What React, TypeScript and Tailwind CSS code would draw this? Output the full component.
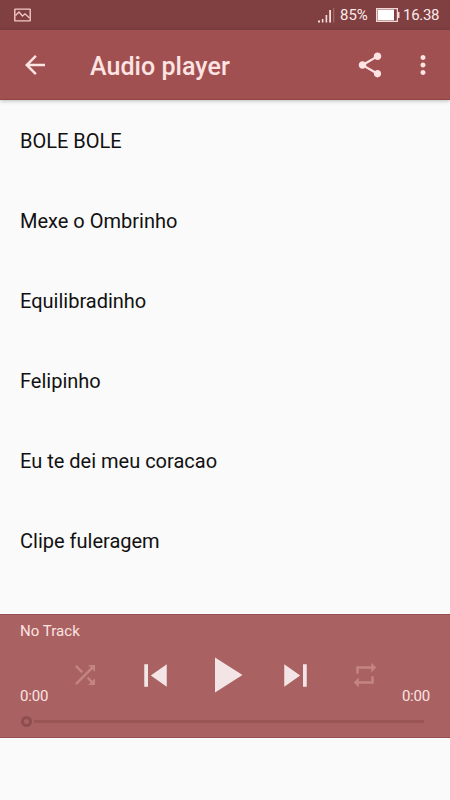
import { ReactNode } from 'react'

const TRACKS = [
  'BOLE BOLE',
  'Mexe o Ombrinho',
  'Equilibradinho',
  'Felipinho',
  'Eu te dei meu coracao',
  'Clipe fuleragem'
]

interface IconProps {
  path: string
  className?: string
}

/** 24 unit material icon */
function Icon({ path, className = '' }: IconProps) {
  return (
    <svg viewBox="0 0 24 24" fill="currentColor" className={`shrink-0 ${className}`}>
      <path d={path} />
    </svg>
  )
}

interface IconButtonProps {
  label: string
  className?: string
  children: ReactNode
}

function IconButton({ label, className = '', children }: IconButtonProps) {
  return (
    <button aria-label={label} className={`flex items-center justify-center ${className}`}>
      {children}
    </button>
  )
}

function StatusBar() {
  return (
    <div className="flex h-[30px] items-center bg-[#803f40] text-[#fbeaea]">
      <svg viewBox="0 0 17 14" className="ml-[14px] h-[14px] w-[17px]" fill="none" stroke="#f3c9c8">
        <rect x="0.8" y="1.1" width="15.4" height="11.8" rx="0.5" strokeWidth="1.4" />
        <path d="M1.5 7.5 5 4l3.5 4L11 5.8l4.5 4.2" strokeWidth="1.3" />
      </svg>
      <svg viewBox="0 0 18 16" className="ml-auto h-4 w-[18px]">
        <path fill="#f7dcdc" d="M1 13.500h2v2H1zM4.800 12h1.600v3.500H4.800zM8.600 8h1.600v7.500H8.600zM12.200 3h1.800v12.500h-1.800z" />
        <path fill="#a06666" d="M16 1h1.300v14.500H16z" />
      </svg>
      <span className="ml-[5px] w-[29px] pt-px text-[15px] leading-none">85%</span>
      <svg viewBox="0 0 24 16" className="ml-[7px] h-4 w-6">
        <path fill="#f3d6d6" d="M0 1h22v4h1.500v6H22v4H0zM1.200 2.200v11.600h19.600V2.200z" fillRule="evenodd" />
        <path fill="#ffffff" d="M1.600 2.600h16.400v10.800H1.600z" />
      </svg>
      <span className="mr-[10px] ml-[3px] w-[37px] pt-px text-[15px] leading-none tracking-[-0.3px]">16.38</span>
    </div>
  )
}

function AppBar() {
  return (
    <header className="relative flex h-[70px] items-center border-b border-[#8f4545] bg-[#a15051] text-[#fde3e1] shadow-[0_1px_4px_rgba(0,0,0,0.25)]">
      <IconButton label="Back" className="ml-5">
        <Icon className="size-[30px]" path="M20 11H7.830l5.590-5.590L12 4l-8 8 8 8 1.410-1.410L7.830 13H20v-2z" />
      </IconButton>
      <h1 className="ml-10 pt-[3px] text-[25px] leading-none font-medium tracking-[0.05px]">Audio player</h1>
      <IconButton label="Share" className="ml-auto">
        <Icon
          className="size-[30px]"
          path="M18 16.080c-.76 0-1.440.3-1.960.77L8.910 12.700c.05-.23.09-.46.09-.7s-.04-.47-.09-.7l7.050-4.110c.54.5 1.250.81 2.040.81 1.660 0 3-1.340 3-3s-1.340-3-3-3-3 1.340-3 3c0 .24.04.47.09.7L8.040 9.810C7.500 9.310 6.790 9 6 9c-1.660 0-3 1.340-3 3s1.340 3 3 3c.79 0 1.500-.31 2.040-.81l7.120 4.160c-.05.21-.08.43-.08.65 0 1.610 1.310 2.920 2.920 2.920s2.920-1.310 2.920-2.920-1.310-2.920-2.920-2.920z"
        />
      </IconButton>
      <IconButton label="More options" className="mr-[12.5px] ml-[22.5px]">
        <Icon
          className="size-[30px]"
          path="M12 8c1.100 0 2-.9 2-2s-.9-2-2-2-2 .9-2 2 .9 2 2 2zm0 2c-1.100 0-2 .9-2 2s.9 2 2 2 2-.9 2-2-.9-2-2-2zm0 6c-1.100 0-2 .9-2 2s.9 2 2 2 2-.9 2-2-.9-2-2-2z"
        />
      </IconButton>
    </header>
  )
}

function Player() {
  return (
    <section className="mb-[62px] h-[124px] border-y border-[#974f50] bg-[#a96162] text-[#fde3e1]">
      <div className="flex h-[30px] items-center px-5 pt-[2px] text-[15px] tracking-[0.05px]">No Track</div>
      <div className="flex h-[60px] px-5">
        <span className="w-[50px] self-end pb-px text-[15px] leading-none tracking-[-0.2px]">0:00</span>
        <div className="flex flex-1 items-center text-[#f3e5e5]">
          <IconButton label="Shuffle" className="text-[#c38482]">
            <Icon
              className="size-[30px]"
              path="M10.590 9.170L5.410 4 4 5.410l5.170 5.170 1.420-1.410zM14.500 4l2.040 2.040L4 18.590 5.410 20 17.960 7.460 20 9.500V4h-5.500zm.33 9.410l-1.410 1.410 3.130 3.130L14.500 20H20v-5.500l-2.040 2.040-3.130-3.130z"
            />
          </IconButton>
          <IconButton label="Previous" className="ml-[32.5px]">
            <Icon className="size-[45px]" path="M6 6h2v12H6zm3.500 6l8.500 6V6z" />
          </IconButton>
          <IconButton label="Play" className="ml-[17.500px]">
            <Icon className="size-[60px]" path="M8 5v14l11-7z" />
          </IconButton>
          <IconButton label="Next" className="ml-[17.500px]">
            <Icon className="size-[45px]" path="M6 18l8.500-6L6 6v12zM16 6v12h2V6h-2z" />
          </IconButton>
          <IconButton label="Repeat" className="ml-[32.5px] text-[#c38482]">
            <Icon className="size-[30px]" path="M7 7h10v3l4-4-4-4v3H5v6h2V7zm10 10H7v-3l-4 4 4 4v-3h12v-6h-2v4z" />
          </IconButton>
        </div>
        <span className="self-end pb-px text-[15px] leading-none tracking-[-0.2px]">0:00</span>
      </div>
      {/* Seek bar */}
      <div className="flex h-8 items-center pr-[26px] pl-[21px]">
        <div className="size-[11px] rounded-full border-[3px] border-[#8e4e4f]" />
        <div className="ml-[2px] h-[3px] flex-1 bg-[#9a5657]" />
      </div>
    </section>
  )
}

export default function App() {
  return (
    <div className="flex h-[800px] w-[450px] flex-col overflow-hidden bg-[#fafafa] font-[Roboto,sans-serif]">
      <StatusBar />
      <AppBar />
      <ul className="flex-1 overflow-hidden text-[20px] text-[#111111]">
        {TRACKS.map((track) => (
          <li key={track} className="flex h-20 items-center px-5 pt-[2px]">
            {track}
          </li>
        ))}
      </ul>
      <Player />
    </div>
  )
}
